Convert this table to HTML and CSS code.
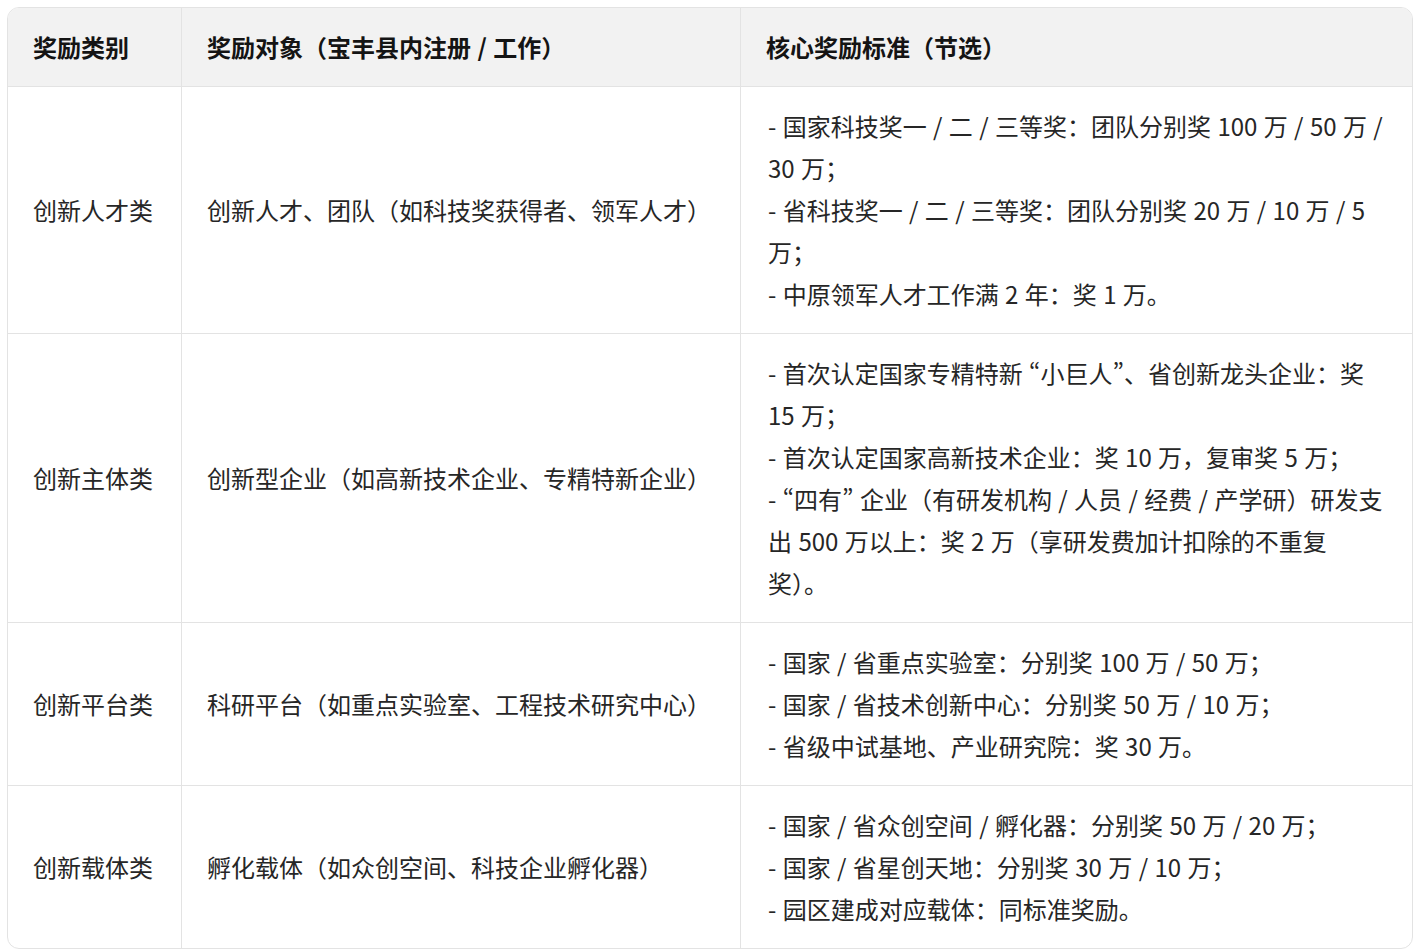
FILE: index.html
```html
<!DOCTYPE html>
<html lang="zh-CN">
<head>
<meta charset="utf-8">
<title>奖励标准</title>
<link rel="stylesheet" href="styles.css">
</head>
<body>
<div class="table-wrap">
  <table class="reward-table">
    <colgroup>
      <col class="col-type">
      <col class="col-target">
      <col class="col-standard">
    </colgroup>
    <thead>
      <tr>
        <th>奖励类别</th>
        <th>奖励对象（宝丰县内注册 / 工作）</th>
        <th>核心奖励标准（节选）</th>
      </tr>
    </thead>
    <tbody>
      <tr>
        <td>创新人才类</td>
        <td>创新人才、团队（如科技奖获得者、领军人才）</td>
        <td>- 国家科技奖一 / 二 / 三等奖：团队分别奖 100 万 / 50 万 / 30 万；<br>- 省科技奖一 / 二 / 三等奖：团队分别奖 20 万 / 10 万 / 5 万；<br>- 中原领军人才工作满 2 年：奖 1 万。</td>
      </tr>
      <tr>
        <td>创新主体类</td>
        <td>创新型企业（如高新技术企业、专精特新企业）</td>
        <td>- 首次认定国家专精特新 <span class="q">“小巨人”</span>、省创新龙头企业：奖 15 万；<br>- 首次认定国家高新技术企业：奖 10 万，复审奖 5 万；<br>- <span class="q">“四有”</span> 企业（有研发机构 / 人员 / 经费 / 产学研）研发支出 500 万以上：奖 2 万（享研发费加计扣除的不重复奖）。</td>
      </tr>
      <tr>
        <td>创新平台类</td>
        <td>科研平台（如重点实验室、工程技术研究中心）</td>
        <td>- 国家 / 省重点实验室：分别奖 100 万 / 50 万；<br>- 国家 / 省技术创新中心：分别奖 50 万 / 10 万；<br>- 省级中试基地、产业研究院：奖 30 万。</td>
      </tr>
      <tr>
        <td>创新载体类</td>
        <td>孵化载体（如众创空间、科技企业孵化器）</td>
        <td>- 国家 / 省众创空间 / 孵化器：分别奖 50 万 / 20 万；<br>- 国家 / 省星创天地：分别奖 30 万 / 10 万；<br>- 园区建成对应载体：同标准奖励。</td>
      </tr>
    </tbody>
  </table>
</div>
</body>
</html>
```

FILE: styles.css
```css
html, body {
  background: #ffffff;
}
body {
  margin: 7px 6px 0 7px;
  font-family: "Noto Sans CJK SC", "Noto Sans", sans-serif;
  font-size: 24px;
  line-height: 42px;
  color: #262626;
}
.table-wrap {
  border: 1px solid #e3e3e3;
  border-radius: 12px;
  overflow: hidden;
}
.reward-table {
  width: 100%;
  table-layout: fixed;
  border-collapse: separate;
  border-spacing: 0;
}
.col-type { width: 174px; }
.col-target { width: 559px; }
.reward-table th,
.reward-table td {
  padding: 18px 26px 18px 25px;
  border-right: 1px solid #e3e3e3;
  border-bottom: 1px solid #e3e3e3;
  text-align: left;
  vertical-align: middle;
  word-spacing: 1px;
}
.reward-table th:last-child,
.reward-table td:last-child {
  border-right: none;
}
.reward-table tbody tr:last-child td {
  border-bottom: none;
}
.reward-table th {
  background: #f2f2f2;
  font-weight: 700;
  color: #141414;
}
.reward-table td:last-child {
  padding-left: 27px;
}
.q {
  font-feature-settings: "pwid" 1;
}
```
